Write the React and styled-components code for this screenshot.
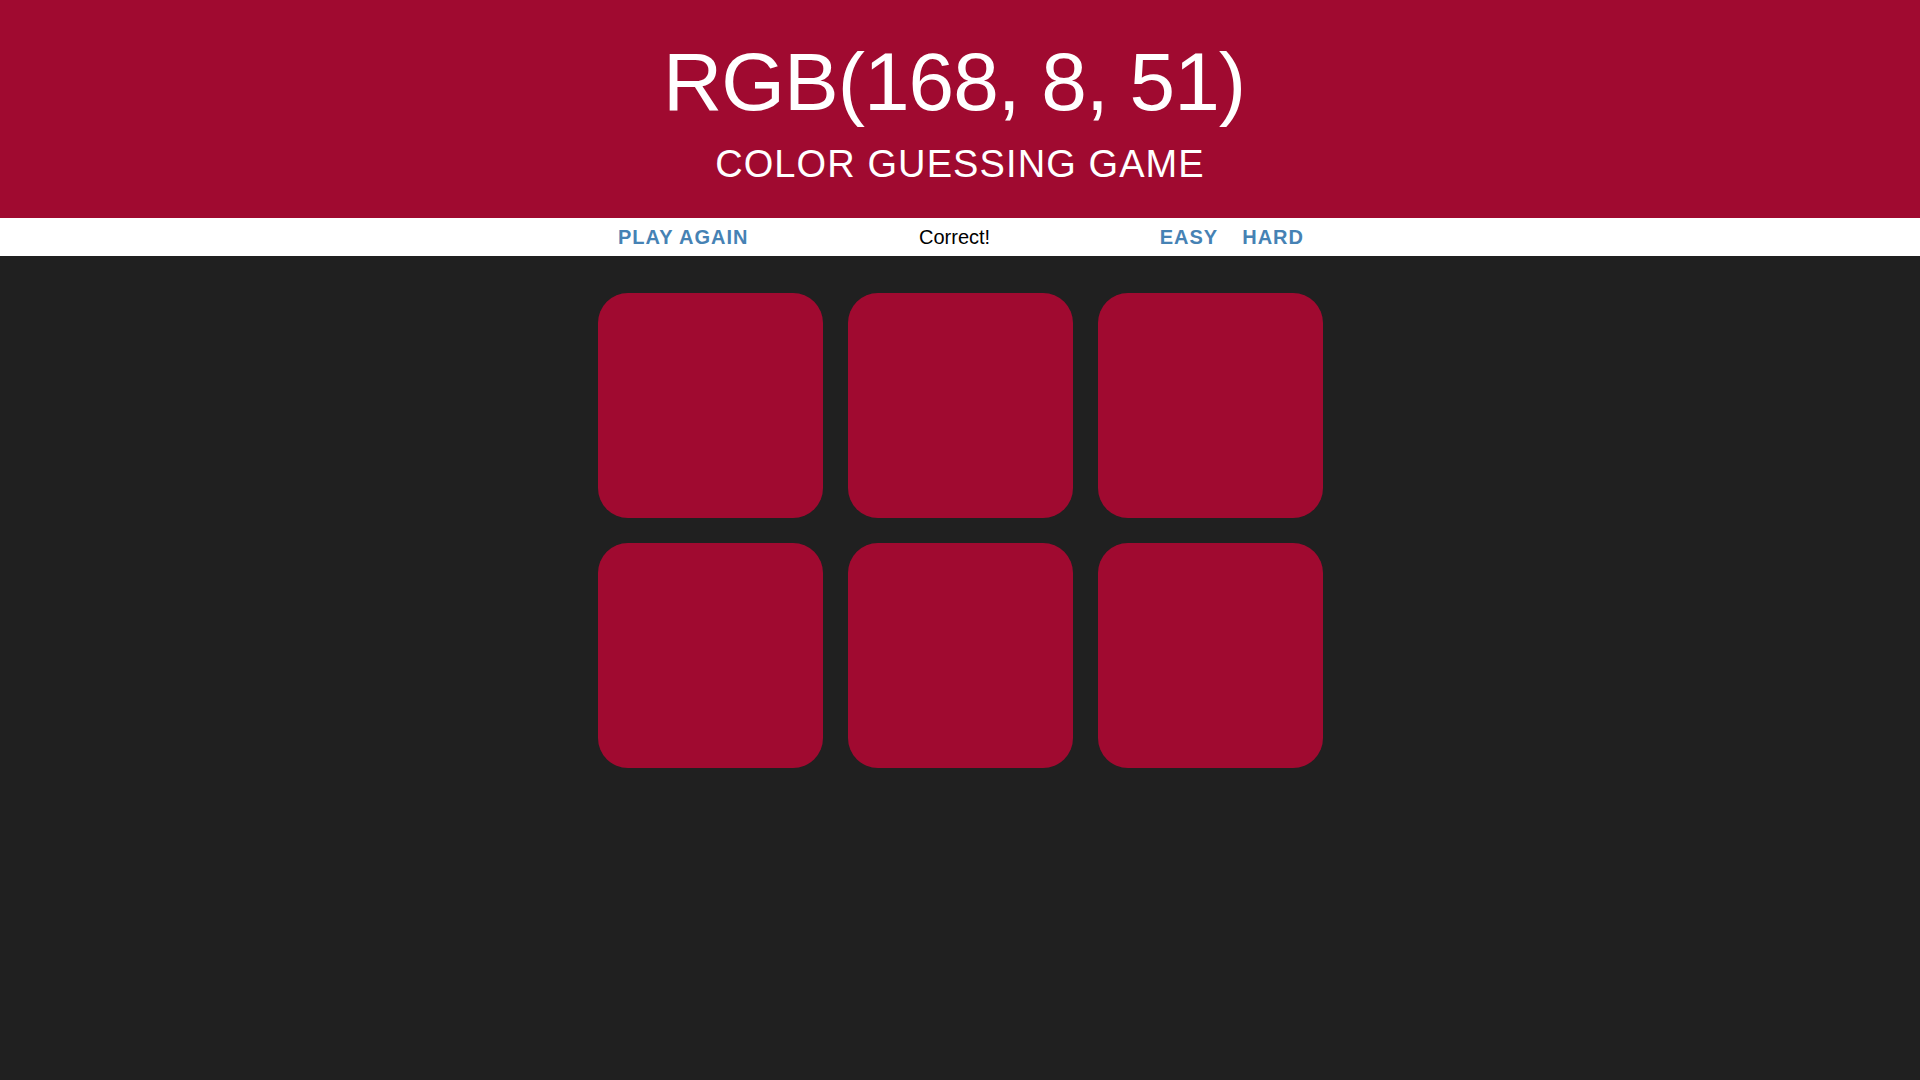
import { useState } from "react";
import styled, { createGlobalStyle } from "styled-components";

const target = { r: 168, g: 8, b: 51 };
const shown = "#a00a30";

export default function App() {
  const [mode, setMode] = useState("hard");
  const [message] = useState("Correct!");
  const squares = mode === "hard" ? 6 : 3;

  return (
    <>
      <GlobalStyle />
      <Header>
        <Title>
          RGB({target.r}, {target.g}, {target.b})
        </Title>
        <Subtitle>Color Guessing Game</Subtitle>
      </Header>

      <Stripe>
        <StripeRow>
          <NavButton>Play Again</NavButton>
          <Message>{message}</Message>
          <ModeGroup>
            <NavButton $wide onClick={() => setMode("easy")}>
              Easy
            </NavButton>
            <NavButton $wide onClick={() => setMode("hard")}>
              Hard
            </NavButton>
          </ModeGroup>
        </StripeRow>
      </Stripe>

      <Board>
        {Array.from({ length: squares }).map((_, i) => (
          <Square key={i} $color={shown} />
        ))}
      </Board>
    </>
  );
}

const GlobalStyle = createGlobalStyle`
  body {
    margin: 0;
    background-color: #202020;
    font-family: "Liberation Sans", Arial, sans-serif;
  }
  #root {
    min-height: 100vh;
  }
`;

const Header = styled.header`
  background-color: ${shown};
  color: white;
  text-align: center;
  padding: 37px 0 31px;
  height: 218px;
  box-sizing: border-box;
`;

const Title = styled.h1`
  margin: 0;
  font-size: 82px;
  font-weight: normal;
  line-height: 89px;
  letter-spacing: -1px;
  text-transform: uppercase;
  padding-right: 12px;
`;

const Subtitle = styled.h2`
  margin: 15px 0 0;
  font-size: 38px;
  font-weight: normal;
  line-height: 46px;
  letter-spacing: 1.1px;
  text-transform: uppercase;
`;

const Stripe = styled.nav`
  background-color: white;
  height: 38px;
`;

const StripeRow = styled.div`
  width: 700px;
  height: 100%;
  margin: 0 auto;
  display: flex;
  align-items: center;
  justify-content: space-between;
`;

const ModeGroup = styled.div`
  display: flex;
  height: 100%;
  margin-right: -6px;
`;

const NavButton = styled.button`
  height: 100%;
  padding: 0 ${(p) => (p.$wide ? "12px" : "8px")};
  border: none;
  background: none;
  color: steelblue;
  font-family: "Liberation Sans", Arial, sans-serif;
  font-size: 20px;
  font-weight: bold;
  letter-spacing: 1px;
  text-transform: uppercase;
  cursor: pointer;
`;

const Message = styled.span`
  font-size: 20px;
  color: black;
  padding-left: 5px;
`;

const Board = styled.main`
  display: grid;
  grid-template-columns: repeat(3, 225px);
  gap: 25px;
  justify-content: center;
  padding-top: 37px;
`;

const Square = styled.div`
  width: 225px;
  height: 225px;
  border-radius: 30px;
  background-color: ${(p) => p.$color};
`;
